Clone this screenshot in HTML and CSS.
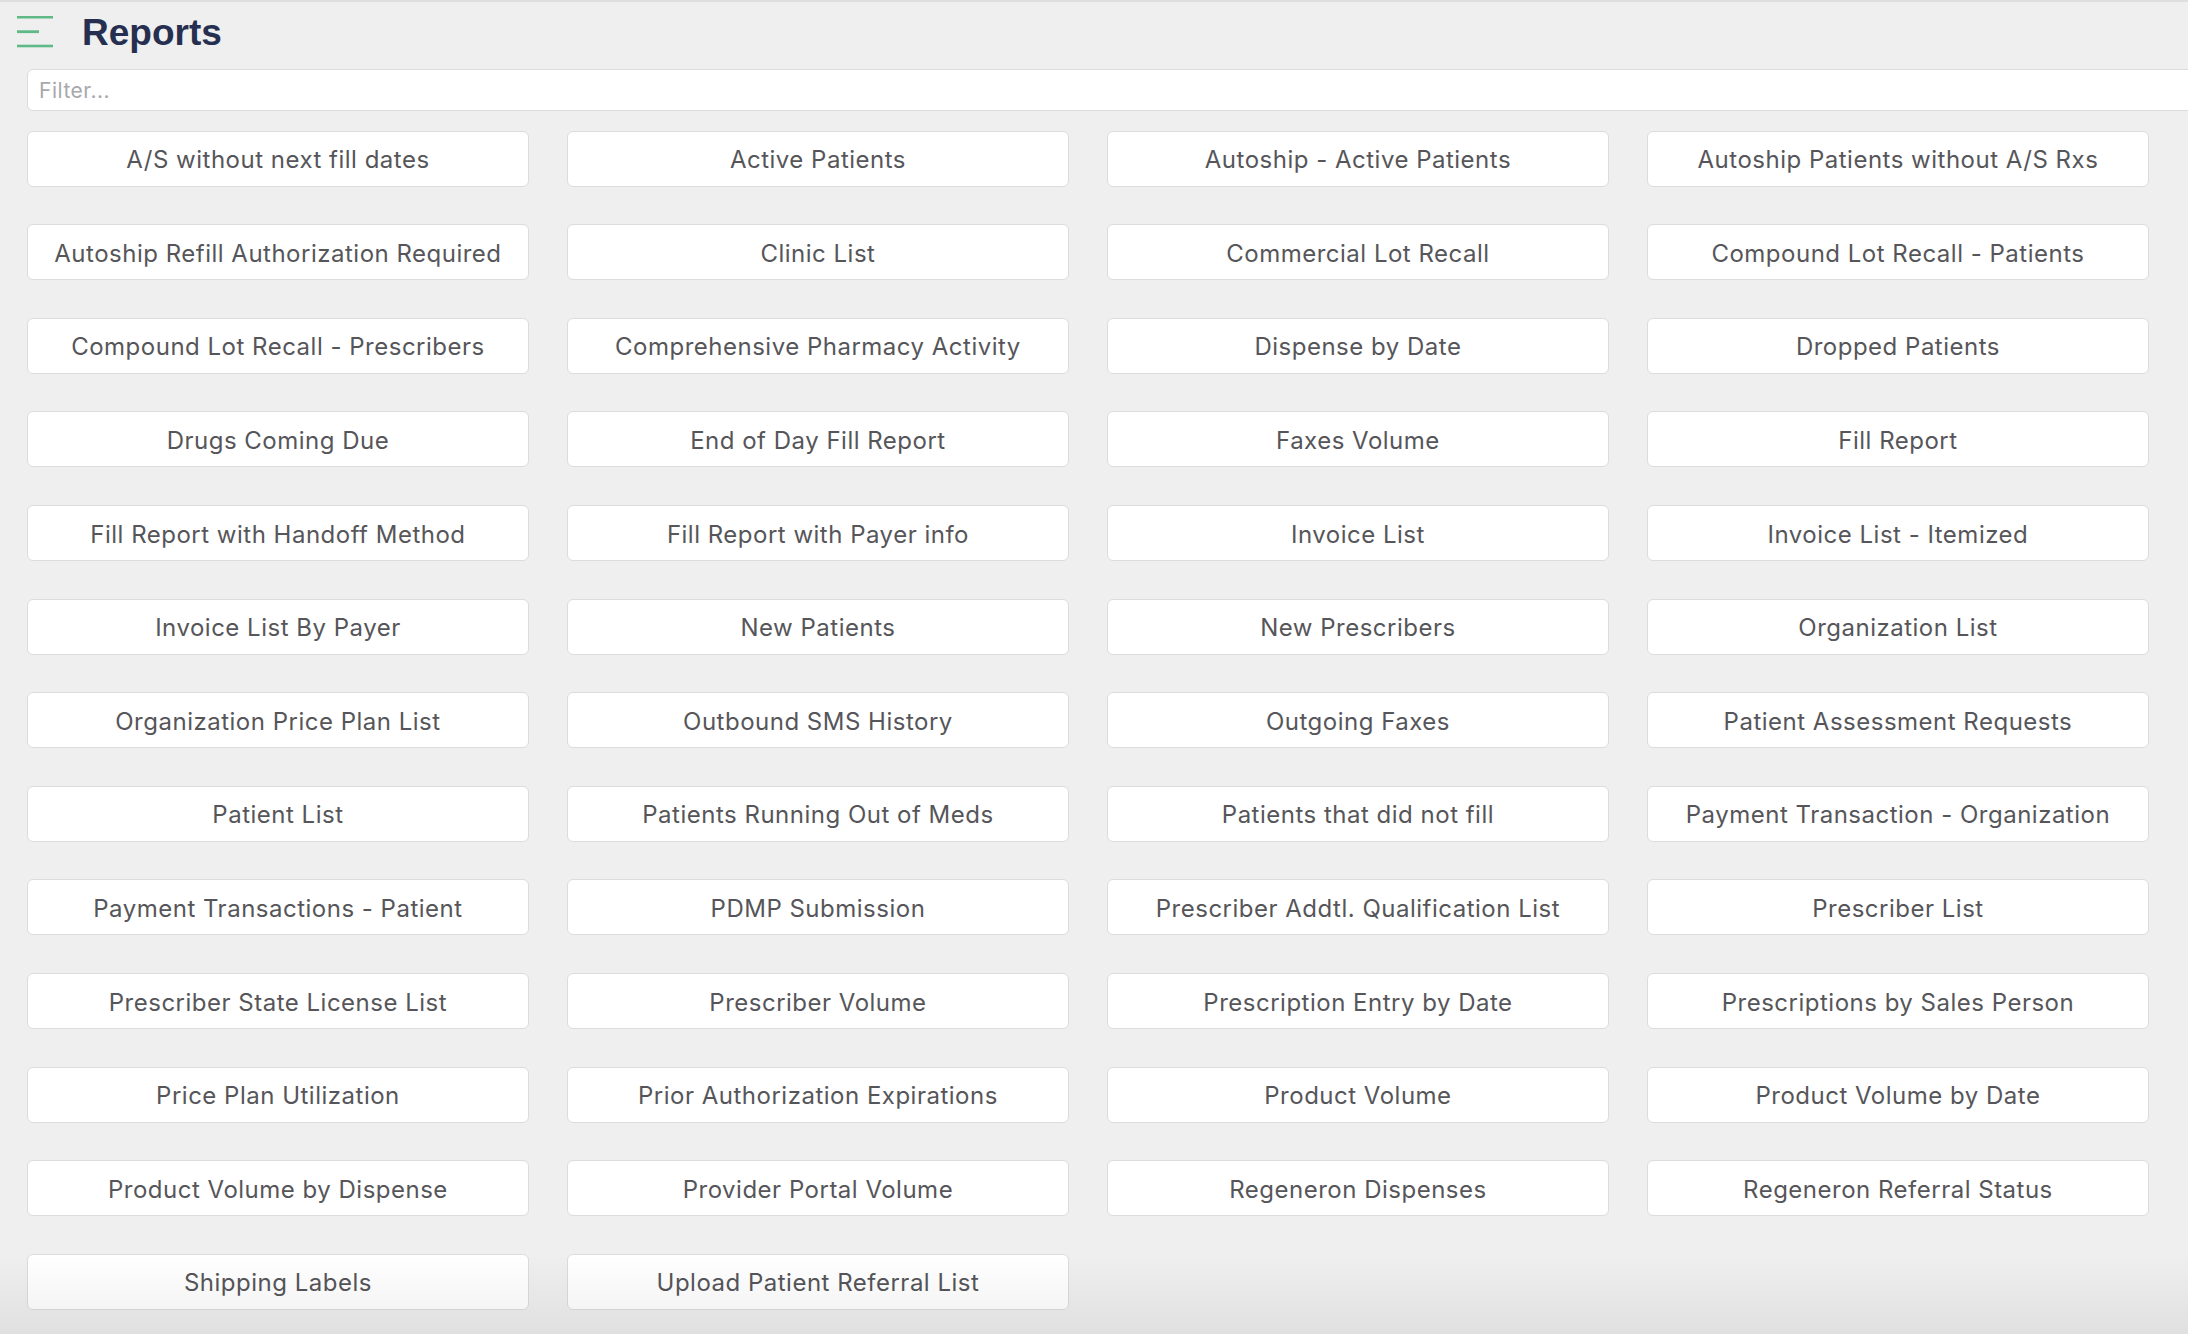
FILE: index.html
```html
<!DOCTYPE html>
<html lang="en">
<head>
<meta charset="utf-8">
<title>Reports</title>
<link rel="stylesheet" href="styles.css">
</head>
<body>
<div class="page">
  <header class="header">
    <svg class="menu-icon" width="36" height="32" viewBox="0 0 36 32" aria-hidden="true">
      <rect x="0" y="0" width="36" height="2.5" fill="#5fb987"/>
      <rect x="0" y="14.3" width="22" height="2.8" fill="#5fb987"/>
      <rect x="0" y="28.7" width="36" height="2.6" fill="#5fb987"/>
    </svg>
    <h1 class="title">Reports</h1>
  </header>
  <div class="filter-row">
    <input class="filter" type="text" placeholder="Filter...">
  </div>
  <div class="grid">
    <button class="report">A/S without next fill dates</button>
    <button class="report">Active Patients</button>
    <button class="report">Autoship - Active Patients</button>
    <button class="report">Autoship Patients without A/S Rxs</button>
    <button class="report">Autoship Refill Authorization Required</button>
    <button class="report">Clinic List</button>
    <button class="report">Commercial Lot Recall</button>
    <button class="report">Compound Lot Recall - Patients</button>
    <button class="report">Compound Lot Recall - Prescribers</button>
    <button class="report">Comprehensive Pharmacy Activity</button>
    <button class="report">Dispense by Date</button>
    <button class="report">Dropped Patients</button>
    <button class="report">Drugs Coming Due</button>
    <button class="report">End of Day Fill Report</button>
    <button class="report">Faxes Volume</button>
    <button class="report">Fill Report</button>
    <button class="report">Fill Report with Handoff Method</button>
    <button class="report">Fill Report with Payer info</button>
    <button class="report">Invoice List</button>
    <button class="report">Invoice List - Itemized</button>
    <button class="report">Invoice List By Payer</button>
    <button class="report">New Patients</button>
    <button class="report">New Prescribers</button>
    <button class="report">Organization List</button>
    <button class="report">Organization Price Plan List</button>
    <button class="report">Outbound SMS History</button>
    <button class="report">Outgoing Faxes</button>
    <button class="report">Patient Assessment Requests</button>
    <button class="report">Patient List</button>
    <button class="report">Patients Running Out of Meds</button>
    <button class="report">Patients that did not fill</button>
    <button class="report">Payment Transaction - Organization</button>
    <button class="report">Payment Transactions - Patient</button>
    <button class="report">PDMP Submission</button>
    <button class="report">Prescriber Addtl. Qualification List</button>
    <button class="report">Prescriber List</button>
    <button class="report">Prescriber State License List</button>
    <button class="report">Prescriber Volume</button>
    <button class="report">Prescription Entry by Date</button>
    <button class="report">Prescriptions by Sales Person</button>
    <button class="report">Price Plan Utilization</button>
    <button class="report">Prior Authorization Expirations</button>
    <button class="report">Product Volume</button>
    <button class="report">Product Volume by Date</button>
    <button class="report">Product Volume by Dispense</button>
    <button class="report">Provider Portal Volume</button>
    <button class="report">Regeneron Dispenses</button>
    <button class="report">Regeneron Referral Status</button>
    <button class="report">Shipping Labels</button>
    <button class="report">Upload Patient Referral List</button>
  </div>
</div>
<div class="bottom-fade"></div>
</body>
</html>
```

FILE: styles.css
```css
html, body {
  margin: 0;
  padding: 0;
  height: 100%;
  overflow: hidden;
}

body {
  background: #efefef;
  font-family: Inter, "Liberation Sans", Arial, sans-serif;
  border-top: 2px solid #dedede;
  box-sizing: border-box;
}

.header {
  display: flex;
  align-items: center;
  height: 62px;
  padding-left: 17px;
  gap: 29px;
}

.menu-icon {
  display: block;
  flex: none;
  margin-top: -3px;
}

.title {
  margin: 0;
  font-family: "Liberation Sans", Arial, sans-serif;
  font-weight: 700;
  font-size: 37px;
  line-height: 44px;
  color: #262f50;
}

.filter-row {
  padding-left: 27px;
  margin-top: 5px;
  width: 2300px;
}

.filter {
  display: block;
  box-sizing: border-box;
  width: 100%;
  height: 42px;
  border: 1px solid #dcdce0;
  border-radius: 6px;
  background: #fff;
  padding: 1px 11px 0;
  font-family: Inter, "Liberation Sans", Arial, sans-serif;
  font-size: 21px;
  letter-spacing: 0.5px;
  color: #333;
  outline: none;
}

.filter::placeholder {
  color: #a8a8ad;
}

.grid {
  display: grid;
  grid-template-columns: repeat(4, 502.5px);
  column-gap: 37.5px;
  row-gap: 37.6px;
  padding-left: 26.7px;
  margin-top: 19.7px;
}

.report {
  box-sizing: border-box;
  height: 56px;
  border: 1px solid #dcdce0;
  border-radius: 6px;
  background: #fff;
  font-family: Inter, "Liberation Sans", Arial, sans-serif;
  font-size: 24px;
  letter-spacing: 0.5px;
  color: #56565a;
  padding: 2px 6px 0;
  text-align: center;
  white-space: nowrap;
  cursor: pointer;
}

.bottom-fade {
  position: fixed;
  left: 0;
  right: 0;
  bottom: 0;
  height: 80px;
  background: linear-gradient(to bottom, rgba(0,0,0,0), rgba(0,0,0,0.06));
  pointer-events: none;
}
```
